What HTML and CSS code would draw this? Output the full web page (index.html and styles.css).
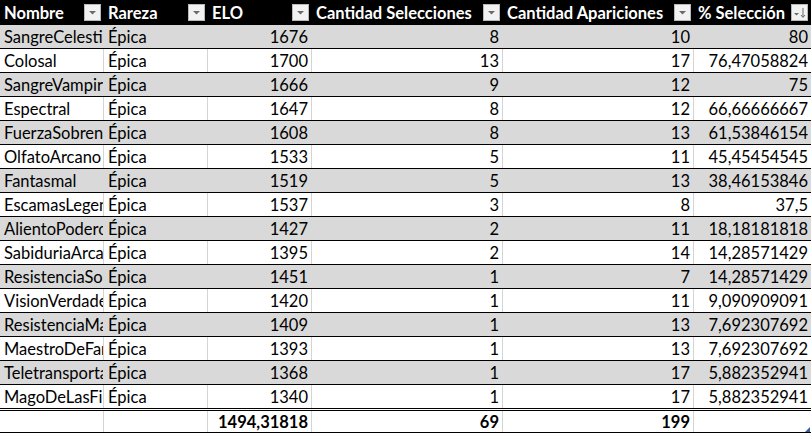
FILE: index.html
```html
<!DOCTYPE html>
<html lang="es">
<head>
<meta charset="utf-8">
<title>Tabla</title>
<link rel="stylesheet" href="styles.css">
</head>
<body>
<div class="sheet">
  <div class="row head">
    <div class="hc"><span>Nombre</span><span class="btn"><svg width="15" height="15" viewBox="0 0 15 15"><polygon points="4,6 11,6 7.5,9.5" fill="#6a6a6a"/></svg></span></div>
    <div class="hc"><span>Rareza</span><span class="btn"><svg width="15" height="15" viewBox="0 0 15 15"><polygon points="4,6 11,6 7.5,9.5" fill="#6a6a6a"/></svg></span></div>
    <div class="hc"><span>ELO</span><span class="btn"><svg width="15" height="15" viewBox="0 0 15 15"><polygon points="4,6 11,6 7.5,9.5" fill="#6a6a6a"/></svg></span></div>
    <div class="hc"><span>Cantidad Selecciones</span><span class="btn"><svg width="15" height="15" viewBox="0 0 15 15"><polygon points="4,6 11,6 7.5,9.5" fill="#6a6a6a"/></svg></span></div>
    <div class="hc"><span>Cantidad Apariciones</span><span class="btn"><svg width="15" height="15" viewBox="0 0 15 15"><polygon points="4,6 11,6 7.5,9.5" fill="#6a6a6a"/></svg></span></div>
    <div class="hc"><span>% Selección</span><span class="btn"><svg width="15" height="15" viewBox="0 0 15 15"><polygon points="2,8 7,8 4.5,10.5" fill="#6a6a6a"/><path d="M11 3 V12 M9 10 L11 12.5 L13 10" stroke="#6a6a6a" stroke-width="1" fill="none"/></svg></span></div>
  </div>

  <div class="row g"><div class="c">SangreCelestial</div><div class="c">Épica</div><div class="c n">1676</div><div class="c n">8</div><div class="c n">10</div><div class="c n">80</div></div>
  <div class="row w"><div class="c">Colosal</div><div class="c">Épica</div><div class="c n">1700</div><div class="c n">13</div><div class="c n">17</div><div class="c n">76,47058824</div></div>
  <div class="row g"><div class="c">SangreVampirica</div><div class="c">Épica</div><div class="c n">1666</div><div class="c n">9</div><div class="c n">12</div><div class="c n">75</div></div>
  <div class="row w"><div class="c">Espectral</div><div class="c">Épica</div><div class="c n">1647</div><div class="c n">8</div><div class="c n">12</div><div class="c n">66,66666667</div></div>
  <div class="row g"><div class="c">FuerzaSobrenatural</div><div class="c">Épica</div><div class="c n">1608</div><div class="c n">8</div><div class="c n">13</div><div class="c n">61,53846154</div></div>
  <div class="row w"><div class="c">OlfatoArcano</div><div class="c">Épica</div><div class="c n">1533</div><div class="c n">5</div><div class="c n">11</div><div class="c n">45,45454545</div></div>
  <div class="row g"><div class="c">Fantasmal</div><div class="c">Épica</div><div class="c n">1519</div><div class="c n">5</div><div class="c n">13</div><div class="c n">38,46153846</div></div>
  <div class="row w"><div class="c">EscamasLegendarias</div><div class="c">Épica</div><div class="c n">1537</div><div class="c n">3</div><div class="c n">8</div><div class="c n">37,5</div></div>
  <div class="row g"><div class="c">AlientoPoderoso</div><div class="c">Épica</div><div class="c n">1427</div><div class="c n">2</div><div class="c n">11</div><div class="c n">18,18181818</div></div>
  <div class="row w"><div class="c">SabiduriaArcana</div><div class="c">Épica</div><div class="c n">1395</div><div class="c n">2</div><div class="c n">14</div><div class="c n">14,28571429</div></div>
  <div class="row g"><div class="c">ResistenciaSobrenatural</div><div class="c">Épica</div><div class="c n">1451</div><div class="c n">1</div><div class="c n">7</div><div class="c n">14,28571429</div></div>
  <div class="row w"><div class="c">VisionVerdadera</div><div class="c">Épica</div><div class="c n">1420</div><div class="c n">1</div><div class="c n">11</div><div class="c n">9,090909091</div></div>
  <div class="row g"><div class="c">ResistenciaMagica</div><div class="c">Épica</div><div class="c n">1409</div><div class="c n">1</div><div class="c n">13</div><div class="c n">7,692307692</div></div>
  <div class="row w"><div class="c">MaestroDeFamiliares</div><div class="c">Épica</div><div class="c n">1393</div><div class="c n">1</div><div class="c n">13</div><div class="c n">7,692307692</div></div>
  <div class="row g"><div class="c">Teletransportacion</div><div class="c">Épica</div><div class="c n">1368</div><div class="c n">1</div><div class="c n">17</div><div class="c n">5,882352941</div></div>
  <div class="row w last"><div class="c">MagoDeLasFieras</div><div class="c">Épica</div><div class="c n">1340</div><div class="c n">1</div><div class="c n">17</div><div class="c n">5,882352941</div></div>

  <div class="row w total"><div class="c"></div><div class="c"></div><div class="c n">1494,31818</div><div class="c n">69</div><div class="c n">199</div><div class="c n"></div></div>
  <span class="handle"></span>
</div>
</body>
</html>
```

FILE: styles.css
```css
html, body {
  margin: 0;
  padding: 0;
  background: #ffffff;
}

.sheet {
  position: relative;
  width: 811px;
  font-family: Lato, "Liberation Sans", sans-serif;
  font-size: 16.5px;
  color: #000;
}

.row {
  display: grid;
  grid-template-columns: 104px 104px 104px 191px 191px 117px;
  height: 24px;
  box-sizing: border-box;
  border-bottom: 1px solid #000;
}

.head {
  height: 25px;
  background: #000;
  color: #fff;
  font-weight: bold;
  border-bottom: none;
}

.hc {
  display: flex;
  align-items: center;
  justify-content: space-between;
  padding: 0 3px 0 4px;
  overflow: hidden;
  white-space: nowrap;
}

.btn {
  flex: none;
  width: 15px;
  height: 15px;
  background: #f2f2f2;
  border: 1px solid #b9b9b9;
  display: flex;
}

.c {
  display: flex;
  align-items: center;
  padding: 0 3px 0 4px;
  overflow: hidden;
  white-space: nowrap;
  box-sizing: border-box;
  border-right: 1px solid #d4d4d4;
}

.c:last-child {
  border-right: none;
}

.n {
  justify-content: flex-end;
}

.g {
  background: #d9d9d9;
}

.g .c {
  border-right-color: #d9d9d9;
}

.w {
  background: #ffffff;
}

.last {
  border-bottom: 3px double #000;
  height: 26px;
}

.total {
  height: 22px;
  font-weight: bold;
}

.handle {
  position: absolute;
  right: 1px;
  bottom: 1px;
  width: 5px;
  height: 5px;
  background: #3f5a9e;
  clip-path: polygon(100% 0, 100% 100%, 0 100%);
}
```
